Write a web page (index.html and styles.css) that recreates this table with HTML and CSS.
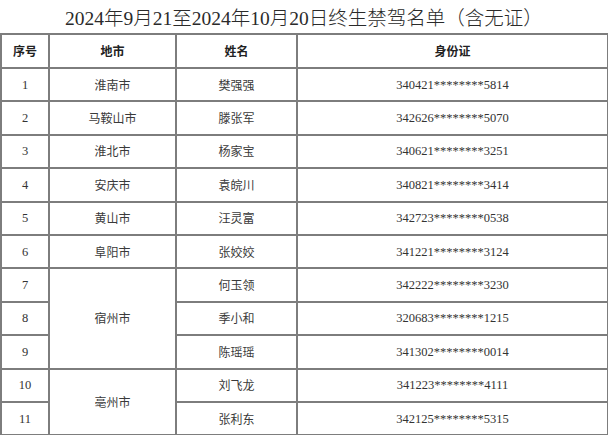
FILE: index.html
```html
<!DOCTYPE html>
<html lang="zh-CN">
<head>
<meta charset="utf-8">
<title>终生禁驾名单</title>
<link rel="stylesheet" href="styles.css">
</head>
<body>
<div class="page">
  <h1 class="title">2024年9月21至2024年10月20日终生禁驾名单（含无证）</h1>
  <table class="list">
    <colgroup>
      <col class="c-no"><col class="c-city"><col class="c-name"><col class="c-id">
    </colgroup>
    <thead>
      <tr><th>序号</th><th>地市</th><th>姓名</th><th>身份证</th></tr>
    </thead>
    <tbody>
      <tr><td class="num">1</td><td>淮南市</td><td>樊强强</td><td class="num">340421********5814</td></tr>
      <tr><td class="num">2</td><td>马鞍山市</td><td>滕张军</td><td class="num">342626********5070</td></tr>
      <tr><td class="num">3</td><td>淮北市</td><td>杨家宝</td><td class="num">340621********3251</td></tr>
      <tr><td class="num">4</td><td>安庆市</td><td>袁皖川</td><td class="num">340821********3414</td></tr>
      <tr><td class="num">5</td><td>黄山市</td><td>汪灵富</td><td class="num">342723********0538</td></tr>
      <tr><td class="num">6</td><td>阜阳市</td><td>张姣姣</td><td class="num">341221********3124</td></tr>
      <tr><td class="num">7</td><td rowspan="3">宿州市</td><td>何玉领</td><td class="num">342222********3230</td></tr>
      <tr><td class="num">8</td><td>季小和</td><td class="num">320683********1215</td></tr>
      <tr><td class="num">9</td><td>陈瑶瑶</td><td class="num">341302********0014</td></tr>
      <tr><td class="num">10</td><td rowspan="2">亳州市</td><td>刘飞龙</td><td class="num">341223********4111</td></tr>
      <tr><td class="num">11</td><td>张利东</td><td class="num">342125********5315</td></tr>
    </tbody>
  </table>
</div>
</body>
</html>
```
FILE: styles.css
```css
html, body {
  margin: 0;
  padding: 0;
  background: #ffffff;
}
.page {
  width: 608px;
  height: 435px;
  overflow: hidden;
}
.title {
  margin: 0;
  height: 33px;
  line-height: 33px;
  padding-top: 2px;
  box-sizing: border-box;
  text-align: center;
  font-family: "Liberation Serif", "Noto Sans CJK SC", serif;
  font-weight: 300;
  font-size: 19.5px;
  color: #2a2a2a;
  white-space: nowrap;
}
.list {
  width: 607px;
  border-collapse: collapse;
  table-layout: fixed;
  font-family: "Noto Sans CJK SC", sans-serif;
  font-size: 12px;
  color: #3a3a3a;
}
.c-no { width: 48px; }
.c-city { width: 127px; }
.c-name { width: 121px; }
.c-id { width: 311px; }
.list th,
.list td {
  border: 2px solid #7d7d7d;
  text-align: center;
  vertical-align: middle;
  padding: 0;
  height: 31.4px;
  line-height: 14px;
}
.list th {
  height: 32px;
  font-weight: 700;
  color: #222;
}
.list td {
  font-weight: 400;
}
.list td.num {
  font-family: "Liberation Serif", serif;
  font-size: 12.5px;
  color: #333;
}
```
